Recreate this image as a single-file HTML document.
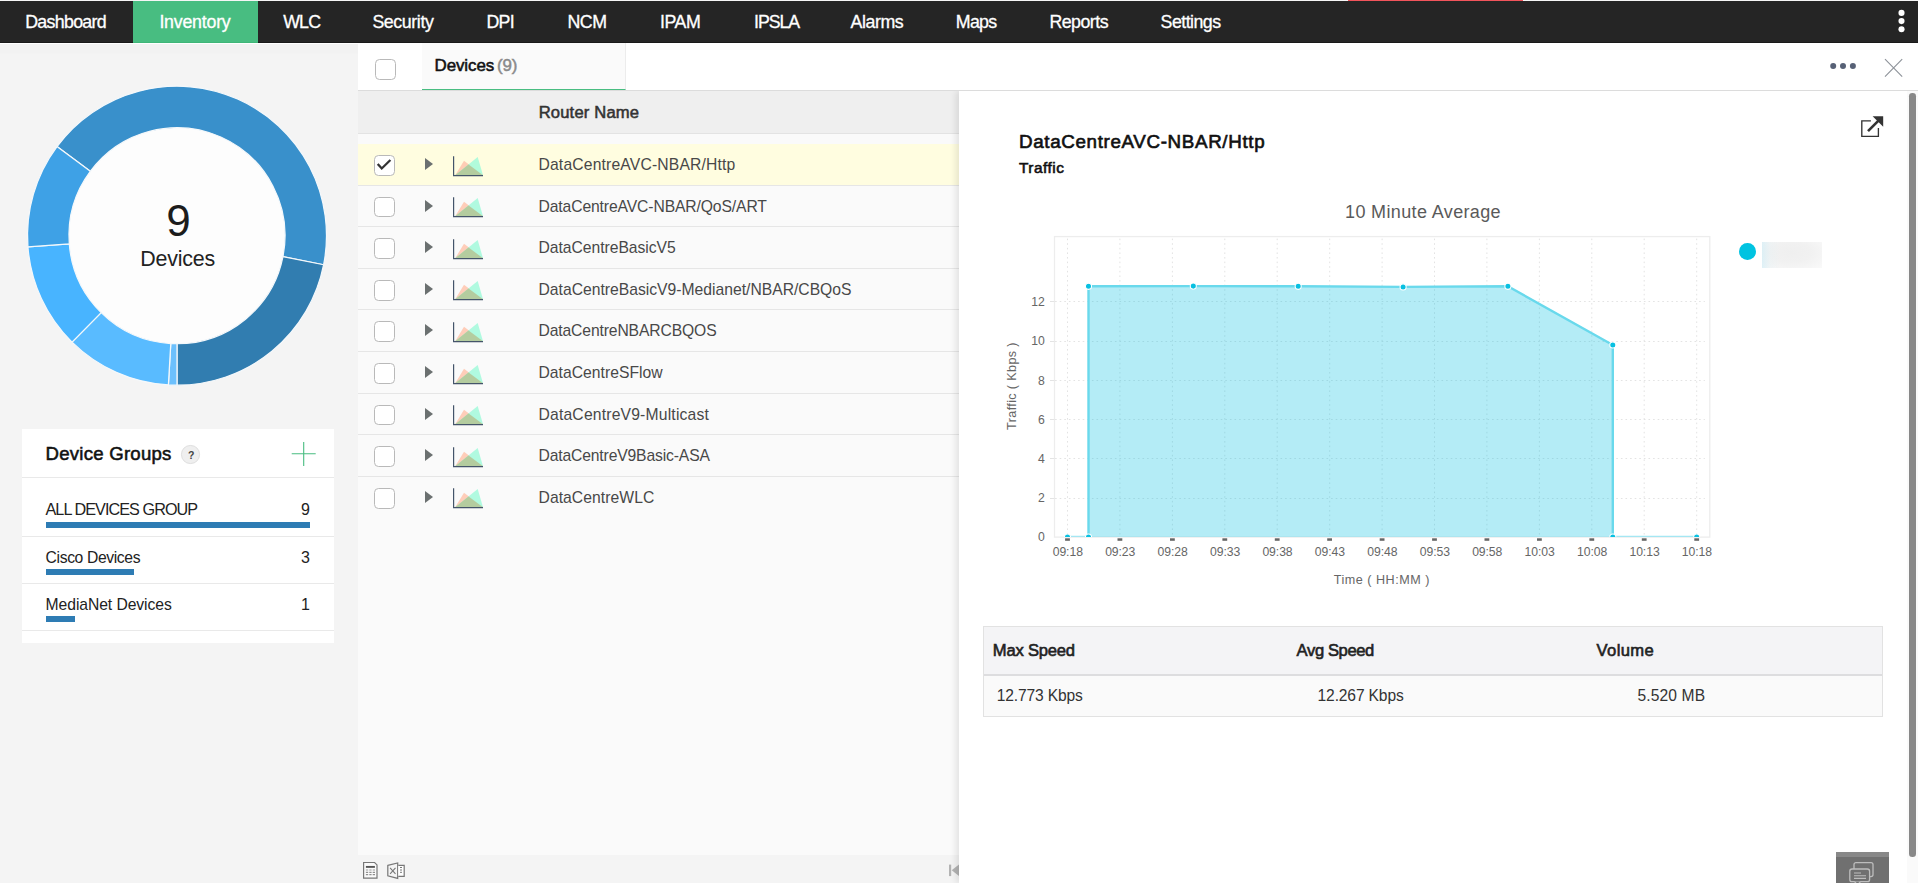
<!DOCTYPE html>
<html lang="en">
<head>
<meta charset="utf-8">
<title>Inventory - Devices</title>
<style>
*{box-sizing:border-box;margin:0;padding:0}
html,body{width:1918px;height:883px;overflow:hidden}
body{position:relative;background:#f4f4f4;font-family:"Liberation Sans",Arial,sans-serif;color:#333}
.t{position:absolute;white-space:nowrap;display:block}
.abs{position:absolute}
#nav{position:absolute;left:0;top:0;width:1918px;height:43px;background:#252525;border-bottom:1px solid #191919}
#topline{position:absolute;left:0;top:0;width:1918px;height:1px;background:#f6f6f6}
#redline{position:absolute;left:1348px;top:0;width:175px;height:1px;background:#f2545b}
#navsel{position:absolute;left:133px;top:1px;width:125px;height:42px;background:#48bd81;border-bottom:1px solid #3fb678}
#side{position:absolute;left:0;top:43px;width:358px;height:840px;background:linear-gradient(180deg,#fff 0,#fff 1px,#f2f2f2 1px,#f2f2f2 10px,#f4f4f4 11px)}
#main{position:absolute;left:358px;top:43px;width:1560px;height:840px;background:#fff}
#mainhead{position:absolute;left:0;top:0;width:1560px;height:48px;background:#fff;border-bottom:1px solid #dcdcdc}
#tab{position:absolute;left:63.7px;top:0;width:204px;height:47px;background:#fafafa;border-right:1px solid #ececec;border-bottom:1.5px solid #48bd81}
.cb{position:absolute;width:20.8px;height:20.8px;border:1px solid #b9b9b9;border-radius:4.5px;background:#fff}
#mbody{position:absolute;left:0;top:48px;width:1560px;height:792px;overflow:hidden}
#list{position:absolute;left:0;top:0;width:601px;height:792px;background:#fafafa}
#thead{position:absolute;left:0;top:0;width:601px;height:42.5px;background:#efefef;border-bottom:1px solid #e3e3e3}
.row{position:absolute;left:0;width:601px;height:41.6px;border-bottom:1px solid #e6e6e6}
.row.sel{background:#fffde0}
.row.last{border-bottom:none}
#foot{position:absolute;left:0;top:764px;width:601px;height:28px;background:#f4f4f4}
#detail{position:absolute;left:601px;top:0;width:959px;height:792px;background:#fff;box-shadow:-3px 0 7px rgba(0,0,0,.10)}
#groups{position:absolute;left:22px;top:429px;width:312px;height:214px;background:#fff}
.gl{position:absolute;left:0;width:312px;height:1px;background:#e9e9e9}
.bar{position:absolute;left:23.7px;height:6px;background:#2e7cb4}
#stats{position:absolute;left:983px;top:626px;width:900px;height:91px;border:1px solid #e2e2e2;background:#fafafa}
#statsh{position:absolute;left:0;top:0;width:898px;height:49px;background:#f4f4f6;border-bottom:2px solid #dddddf}
#track{position:absolute;left:1907px;top:91px;width:11px;height:792px;background:#fafafa}
#scroll{position:absolute;left:1909.2px;top:93px;width:6.6px;height:764px;border-radius:3.3px;background:#888}
#chat{position:absolute;left:1835.8px;top:852px;width:53px;height:31px;background:#707070;border-top:5px solid #888}
</style>
</head>
<body>

<div id="side"></div><div id="nav"></div><div id="navsel"></div><div id="topline"></div><div id="redline"></div>
<nav>
<span class="t" style="left:25.20px;top:10.00px;font-size:17.8px;line-height:24px;color:#fff;-webkit-text-stroke:0.3px #fff;letter-spacing:-0.687px;">Dashboard</span>
<span class="t" style="left:159.40px;top:10.00px;font-size:17.8px;line-height:24px;color:#fff;-webkit-text-stroke:0.3px #fff;letter-spacing:-0.224px;">Inventory</span>
<span class="t" style="left:283.15px;top:10.00px;font-size:17.8px;line-height:24px;color:#fff;-webkit-text-stroke:0.3px #fff;letter-spacing:-0.802px;">WLC</span>
<span class="t" style="left:372.40px;top:10.00px;font-size:17.8px;line-height:24px;color:#fff;-webkit-text-stroke:0.3px #fff;letter-spacing:-0.394px;">Security</span>
<span class="t" style="left:486.40px;top:10.00px;font-size:17.8px;line-height:24px;color:#fff;-webkit-text-stroke:0.3px #fff;letter-spacing:-0.674px;">DPI</span>
<span class="t" style="left:567.40px;top:10.00px;font-size:17.8px;line-height:24px;color:#fff;-webkit-text-stroke:0.3px #fff;letter-spacing:-0.379px;">NCM</span>
<span class="t" style="left:659.90px;top:10.00px;font-size:17.8px;line-height:24px;color:#fff;-webkit-text-stroke:0.3px #fff;letter-spacing:-0.387px;">IPAM</span>
<span class="t" style="left:754.10px;top:10.00px;font-size:17.8px;line-height:24px;color:#fff;-webkit-text-stroke:0.3px #fff;letter-spacing:-1.113px;">IPSLA</span>
<span class="t" style="left:850.60px;top:10.00px;font-size:17.8px;line-height:24px;color:#fff;-webkit-text-stroke:0.3px #fff;letter-spacing:-0.431px;">Alarms</span>
<span class="t" style="left:955.80px;top:10.00px;font-size:17.8px;line-height:24px;color:#fff;-webkit-text-stroke:0.3px #fff;letter-spacing:-0.732px;">Maps</span>
<span class="t" style="left:1049.40px;top:10.00px;font-size:17.8px;line-height:24px;color:#fff;-webkit-text-stroke:0.3px #fff;letter-spacing:-0.518px;">Reports</span>
<span class="t" style="left:1160.60px;top:10.00px;font-size:17.8px;line-height:24px;color:#fff;-webkit-text-stroke:0.3px #fff;letter-spacing:-0.540px;">Settings</span>
</nav>
<svg class="abs" style="left:1895px;top:6px" width="14" height="30" viewBox="0 0 14 30"><circle cx="6.5" cy="6.9" r="3.05" fill="#fff"/><circle cx="6.5" cy="15.1" r="3.05" fill="#fff"/><circle cx="6.5" cy="23.2" r="3.05" fill="#fff"/></svg>
<aside>
<svg class="abs" style="left:0;top:43px" width="358" height="380" viewBox="0 43 358 380">
<circle cx="177" cy="235.7" r="109" fill="#fdfdfd"/>
<path d="M56.98,146.56 A149.5,149.5 0 0 1 323.65,264.74 L282.94,256.68 A108,108 0 0 0 90.30,171.31 Z" fill="#3990cb" stroke="#f4f8fb" stroke-width="1.25" stroke-linejoin="round"/>
<path d="M323.65,264.74 A149.5,149.5 0 0 1 177.00,385.20 L177.00,343.70 A108,108 0 0 0 282.94,256.68 Z" fill="#317db0" stroke="#f4f8fb" stroke-width="1.25" stroke-linejoin="round"/>
<path d="M177.00,385.20 A149.5,149.5 0 0 1 168.39,384.95 L170.78,343.52 A108,108 0 0 0 177.00,343.70 Z" fill="#6cc0fd" stroke="#f4f8fb" stroke-width="1.25" stroke-linejoin="round"/>
<path d="M168.39,384.95 A149.5,149.5 0 0 1 72.03,342.15 L101.17,312.60 A108,108 0 0 0 170.78,343.52 Z" fill="#59bbff" stroke="#f4f8fb" stroke-width="1.25" stroke-linejoin="round"/>
<path d="M72.03,342.15 A149.5,149.5 0 0 1 27.92,246.91 L69.30,243.80 A108,108 0 0 0 101.17,312.60 Z" fill="#48b4ff" stroke="#f4f8fb" stroke-width="1.25" stroke-linejoin="round"/>
<path d="M27.92,246.91 A149.5,149.5 0 0 1 56.98,146.56 L90.30,171.31 A108,108 0 0 0 69.30,243.80 Z" fill="#3ea1e6" stroke="#f4f8fb" stroke-width="1.25" stroke-linejoin="round"/>
</svg>
<span class="t" style="left:166.16px;top:194.00px;font-size:44px;line-height:53px;color:#1c1c1c;">9</span>
<span class="t" style="left:140.30px;top:245.00px;font-size:21.4px;line-height:28px;color:#222;letter-spacing:-0.216px;">Devices</span>
<div id="groups">
<div class="gl" style="top:48px"></div><div class="gl" style="top:107px"></div><div class="gl" style="top:154px"></div><div class="gl" style="top:201px"></div>
<div class="bar" style="top:93px;width:264.3px"></div><div class="bar" style="top:140px;width:88.1px"></div><div class="bar" style="top:187px;width:29.2px"></div>
<div class="abs" style="left:159.2px;top:16.3px;width:18.4px;height:18.4px;border-radius:50%;background:#efefef;border:1px solid #dfdfdf"></div>
<svg class="abs" style="left:269px;top:11.6px" width="26" height="26" viewBox="0 0 26 26"><path d="M12.7 1v24M0.7 12.7h24" stroke="#48bd81" stroke-width="1.1" fill="none"/></svg>
</div>
<span class="t" style="left:45.60px;top:441.00px;font-size:18.6px;line-height:25px;color:#111;-webkit-text-stroke:0.55px #111;letter-spacing:0.229px;">Device Groups</span>
<span class="t" style="left:187.89px;top:447.00px;font-size:10.5px;line-height:16px;color:#444;font-weight:700;">?</span>
<span class="t" style="left:45.50px;top:498.00px;font-size:16.2px;line-height:22px;color:#222;letter-spacing:-0.939px;">ALL DEVICES GROUP</span>
<span class="t" style="left:45.60px;top:547.00px;font-size:15.7px;line-height:21px;color:#222;letter-spacing:-0.374px;">Cisco Devices</span>
<span class="t" style="left:45.60px;top:594.00px;font-size:15.7px;line-height:21px;color:#222;letter-spacing:-0.075px;">MediaNet Devices</span>
<span class="t" style="left:301.10px;top:499.00px;font-size:16px;line-height:21px;color:#222;">9</span>
<span class="t" style="left:301.10px;top:547.00px;font-size:16px;line-height:21px;color:#222;">3</span>
<span class="t" style="left:301.10px;top:594.00px;font-size:16px;line-height:21px;color:#222;">1</span>
</aside>
<main>
<div id="main">
<div id="mainhead"><div id="tab"></div><div class="cb" style="left:17.1px;top:16px"></div></div>
<div id="mbody"><div id="list"><div id="thead"></div>
<div class="row sel" style="top:53.0px">
<div class="cb" style="left:16.1px;top:11.1px"><svg class="abs" style="left:0;top:0" width="19" height="19" viewBox="0 0 19 19"><path d="M2.7 7.9 L6.75 12.45 L15.4 3.95" fill="none" stroke="#333" stroke-width="2.3"/></svg></div>
<svg class="abs" style="left:66px;top:13px" width="10" height="14" viewBox="0 0 10 14"><path d="M1 1.1 L9 7.1 L1 13.1Z" fill="#6b7070"/></svg><svg class="abs" style="left:94px;top:10.5px" width="34" height="23" viewBox="0 0 34 23"><path d="M3.2 20.3 L12 5.7 L31 20.3Z" fill="#ffc4ad" fill-opacity=".85"/><path d="M3.2 20.3 L25.7 1.9 L31 20.3Z" fill="#9dfada" fill-opacity=".8"/><path d="M3.2 20.3 L16.5 9.4 L31 20.3Z" fill="#b4cc9f"/><path d="M1.6 1.3V20.55H31" fill="none" stroke="#44546a" stroke-width="1.2"/></svg>
</div>
<div class="row" style="top:94.6px">
<div class="cb" style="left:16.1px;top:11.1px"></div>
<svg class="abs" style="left:66px;top:13px" width="10" height="14" viewBox="0 0 10 14"><path d="M1 1.1 L9 7.1 L1 13.1Z" fill="#6b7070"/></svg><svg class="abs" style="left:94px;top:10.5px" width="34" height="23" viewBox="0 0 34 23"><path d="M3.2 20.3 L12 5.7 L31 20.3Z" fill="#ffc4ad" fill-opacity=".85"/><path d="M3.2 20.3 L25.7 1.9 L31 20.3Z" fill="#9dfada" fill-opacity=".8"/><path d="M3.2 20.3 L16.5 9.4 L31 20.3Z" fill="#b4cc9f"/><path d="M1.6 1.3V20.55H31" fill="none" stroke="#44546a" stroke-width="1.2"/></svg>
</div>
<div class="row" style="top:136.2px">
<div class="cb" style="left:16.1px;top:11.1px"></div>
<svg class="abs" style="left:66px;top:13px" width="10" height="14" viewBox="0 0 10 14"><path d="M1 1.1 L9 7.1 L1 13.1Z" fill="#6b7070"/></svg><svg class="abs" style="left:94px;top:10.5px" width="34" height="23" viewBox="0 0 34 23"><path d="M3.2 20.3 L12 5.7 L31 20.3Z" fill="#ffc4ad" fill-opacity=".85"/><path d="M3.2 20.3 L25.7 1.9 L31 20.3Z" fill="#9dfada" fill-opacity=".8"/><path d="M3.2 20.3 L16.5 9.4 L31 20.3Z" fill="#b4cc9f"/><path d="M1.6 1.3V20.55H31" fill="none" stroke="#44546a" stroke-width="1.2"/></svg>
</div>
<div class="row" style="top:177.8px">
<div class="cb" style="left:16.1px;top:11.1px"></div>
<svg class="abs" style="left:66px;top:13px" width="10" height="14" viewBox="0 0 10 14"><path d="M1 1.1 L9 7.1 L1 13.1Z" fill="#6b7070"/></svg><svg class="abs" style="left:94px;top:10.5px" width="34" height="23" viewBox="0 0 34 23"><path d="M3.2 20.3 L12 5.7 L31 20.3Z" fill="#ffc4ad" fill-opacity=".85"/><path d="M3.2 20.3 L25.7 1.9 L31 20.3Z" fill="#9dfada" fill-opacity=".8"/><path d="M3.2 20.3 L16.5 9.4 L31 20.3Z" fill="#b4cc9f"/><path d="M1.6 1.3V20.55H31" fill="none" stroke="#44546a" stroke-width="1.2"/></svg>
</div>
<div class="row" style="top:219.4px">
<div class="cb" style="left:16.1px;top:11.1px"></div>
<svg class="abs" style="left:66px;top:13px" width="10" height="14" viewBox="0 0 10 14"><path d="M1 1.1 L9 7.1 L1 13.1Z" fill="#6b7070"/></svg><svg class="abs" style="left:94px;top:10.5px" width="34" height="23" viewBox="0 0 34 23"><path d="M3.2 20.3 L12 5.7 L31 20.3Z" fill="#ffc4ad" fill-opacity=".85"/><path d="M3.2 20.3 L25.7 1.9 L31 20.3Z" fill="#9dfada" fill-opacity=".8"/><path d="M3.2 20.3 L16.5 9.4 L31 20.3Z" fill="#b4cc9f"/><path d="M1.6 1.3V20.55H31" fill="none" stroke="#44546a" stroke-width="1.2"/></svg>
</div>
<div class="row" style="top:261.0px">
<div class="cb" style="left:16.1px;top:11.1px"></div>
<svg class="abs" style="left:66px;top:13px" width="10" height="14" viewBox="0 0 10 14"><path d="M1 1.1 L9 7.1 L1 13.1Z" fill="#6b7070"/></svg><svg class="abs" style="left:94px;top:10.5px" width="34" height="23" viewBox="0 0 34 23"><path d="M3.2 20.3 L12 5.7 L31 20.3Z" fill="#ffc4ad" fill-opacity=".85"/><path d="M3.2 20.3 L25.7 1.9 L31 20.3Z" fill="#9dfada" fill-opacity=".8"/><path d="M3.2 20.3 L16.5 9.4 L31 20.3Z" fill="#b4cc9f"/><path d="M1.6 1.3V20.55H31" fill="none" stroke="#44546a" stroke-width="1.2"/></svg>
</div>
<div class="row" style="top:302.6px">
<div class="cb" style="left:16.1px;top:11.1px"></div>
<svg class="abs" style="left:66px;top:13px" width="10" height="14" viewBox="0 0 10 14"><path d="M1 1.1 L9 7.1 L1 13.1Z" fill="#6b7070"/></svg><svg class="abs" style="left:94px;top:10.5px" width="34" height="23" viewBox="0 0 34 23"><path d="M3.2 20.3 L12 5.7 L31 20.3Z" fill="#ffc4ad" fill-opacity=".85"/><path d="M3.2 20.3 L25.7 1.9 L31 20.3Z" fill="#9dfada" fill-opacity=".8"/><path d="M3.2 20.3 L16.5 9.4 L31 20.3Z" fill="#b4cc9f"/><path d="M1.6 1.3V20.55H31" fill="none" stroke="#44546a" stroke-width="1.2"/></svg>
</div>
<div class="row" style="top:344.2px">
<div class="cb" style="left:16.1px;top:11.1px"></div>
<svg class="abs" style="left:66px;top:13px" width="10" height="14" viewBox="0 0 10 14"><path d="M1 1.1 L9 7.1 L1 13.1Z" fill="#6b7070"/></svg><svg class="abs" style="left:94px;top:10.5px" width="34" height="23" viewBox="0 0 34 23"><path d="M3.2 20.3 L12 5.7 L31 20.3Z" fill="#ffc4ad" fill-opacity=".85"/><path d="M3.2 20.3 L25.7 1.9 L31 20.3Z" fill="#9dfada" fill-opacity=".8"/><path d="M3.2 20.3 L16.5 9.4 L31 20.3Z" fill="#b4cc9f"/><path d="M1.6 1.3V20.55H31" fill="none" stroke="#44546a" stroke-width="1.2"/></svg>
</div>
<div class="row last" style="top:385.8px">
<div class="cb" style="left:16.1px;top:11.1px"></div>
<svg class="abs" style="left:66px;top:13px" width="10" height="14" viewBox="0 0 10 14"><path d="M1 1.1 L9 7.1 L1 13.1Z" fill="#6b7070"/></svg><svg class="abs" style="left:94px;top:10.5px" width="34" height="23" viewBox="0 0 34 23"><path d="M3.2 20.3 L12 5.7 L31 20.3Z" fill="#ffc4ad" fill-opacity=".85"/><path d="M3.2 20.3 L25.7 1.9 L31 20.3Z" fill="#9dfada" fill-opacity=".8"/><path d="M3.2 20.3 L16.5 9.4 L31 20.3Z" fill="#b4cc9f"/><path d="M1.6 1.3V20.55H31" fill="none" stroke="#44546a" stroke-width="1.2"/></svg>
</div>
<div id="foot">
<svg class="abs" style="left:4px;top:6px" width="46" height="20" viewBox="0 0 46 20"><g fill="none" stroke="#777" stroke-width="1.2"><path d="M1.6 1.5h11l2.4 2.4v13.2H1.6z" fill="#fafafa"/><path d="M3.9 5.9h9" stroke-width="1.9" stroke="#555"/><path d="M3.9 9h2.3M7.3 9h2.3M10.7 9h2.3" stroke="#999"/><path d="M3.9 11.3h2.3M7.3 11.3h2.3M10.7 11.3h2.3M3.9 13.7h2.3M7.3 13.7h2.3M10.7 13.7h2.3" stroke-width="1"/><path d="M25.8 4.4 L35.7 1.9 V17.4 L25.8 14.8Z"/><path d="M36.3 4.3h5.9v11h-5.9" fill="#fff"/><path d="M28.1 6.9l5.4 5.9M33.5 6.9l-5.4 5.9" stroke-width="1.1"/><path d="M38 6.5h2M38 9h2M38 11.3h2" stroke-width="1"/></g></svg>
<svg class="abs" style="left:588px;top:9px" width="13" height="13" viewBox="0 0 13 13"><path d="M4.1 0.6v11.5" stroke="#b3b3b3" stroke-width="2.2"/><path d="M5.7 6.35L13 0.6v11.5z" fill="#b3b3b3"/></svg>
</div>
</div>
<div id="detail"></div></div>
</div>
<span class="t" style="left:434.60px;top:54.00px;font-size:16.9px;line-height:23px;color:#111;-webkit-text-stroke:0.55px #111;letter-spacing:-0.087px;">Devices</span>
<span class="t" style="left:497.00px;top:54.00px;font-size:16.9px;line-height:23px;color:#8a8a8a;-webkit-text-stroke:0.5px #8a8a8a;letter-spacing:-0.119px;">(9)</span>
<span class="t" style="left:538.70px;top:101.00px;font-size:16.6px;line-height:23px;color:#333;-webkit-text-stroke:0.55px #333;letter-spacing:0.162px;">Router Name</span>
<span class="t" style="left:538.50px;top:154.00px;font-size:15.7px;line-height:21px;color:#484848;letter-spacing:0.160px;">DataCentreAVC-NBAR/Http</span>
<span class="t" style="left:538.50px;top:196.00px;font-size:15.7px;line-height:21px;color:#484848;letter-spacing:-0.116px;">DataCentreAVC-NBAR/QoS/ART</span>
<span class="t" style="left:538.50px;top:237.00px;font-size:15.7px;line-height:21px;color:#484848;letter-spacing:-0.034px;">DataCentreBasicV5</span>
<span class="t" style="left:538.50px;top:279.00px;font-size:15.7px;line-height:21px;color:#484848;">DataCentreBasicV9-Medianet/NBAR/CBQoS</span>
<span class="t" style="left:538.50px;top:320.00px;font-size:15.7px;line-height:21px;color:#484848;letter-spacing:-0.132px;">DataCentreNBARCBQOS</span>
<span class="t" style="left:538.50px;top:362.00px;font-size:15.7px;line-height:21px;color:#484848;letter-spacing:0.026px;">DataCentreSFlow</span>
<span class="t" style="left:538.50px;top:404.00px;font-size:15.7px;line-height:21px;color:#484848;letter-spacing:0.183px;">DataCentreV9-Multicast</span>
<span class="t" style="left:538.50px;top:445.00px;font-size:15.7px;line-height:21px;color:#484848;letter-spacing:-0.149px;">DataCentreV9Basic-ASA</span>
<span class="t" style="left:538.50px;top:487.00px;font-size:15.7px;line-height:21px;color:#484848;letter-spacing:0.056px;">DataCentreWLC</span>
<svg class="abs" style="left:1826px;top:60px" width="34" height="12" viewBox="0 0 34 12"><circle cx="7.2" cy="6" r="3" fill="#576176"/><circle cx="17" cy="6" r="3" fill="#576176"/><circle cx="26.9" cy="6" r="3" fill="#576176"/></svg>
<svg class="abs" style="left:1883px;top:57px" width="22" height="22" viewBox="0 0 22 22"><path d="M2 2.2 L19.2 19.7 M19.2 2.2 L2 19.7" stroke="#8d9299" stroke-width="1.1" fill="none"/></svg>
<section>
<span class="t" style="left:1019.00px;top:129.00px;font-size:18.8px;line-height:25px;color:#111;-webkit-text-stroke:0.65px #111;letter-spacing:0.648px;">DataCentreAVC-NBAR/Http</span>
<span class="t" style="left:1019.00px;top:157.00px;font-size:15.4px;line-height:21px;color:#111;-webkit-text-stroke:0.6px #111;letter-spacing:0.510px;">Traffic</span>
<svg class="abs" style="left:1858px;top:113px" width="28" height="27" viewBox="0 0 28 27"><path d="M12.9 7.9H3.8V23.3H20.4V15" fill="none" stroke="#333" stroke-width="1.35"/><path d="M10 18.2 L20.5 7.6" stroke="#333" stroke-width="2.6" fill="none"/><path d="M14.6 3.2 H25.2 V13.8Z" fill="#333"/></svg>
<svg class="abs" style="left:980px;top:190px" width="900" height="410" viewBox="980 190 900 410" font-family="'Liberation Sans',Arial,sans-serif">
<rect x="1054.5" y="236.6" width="655.3" height="300.5" fill="#fff" stroke="#ededed" stroke-width="1.3"/>
<path d="M1050.0 498.5H1054.5 M1050.0 458.5H1054.5 M1050.0 419.5H1054.5 M1050.0 380.5H1054.5 M1050.0 341.5H1054.5 M1050.0 301.5H1054.5" stroke="#e4e4e4" stroke-width="1" fill="none"/>
<path d="M1067.5 238.6V537.1 M1119.9 238.6V537.1 M1172.4 238.6V537.1 M1224.8 238.6V537.1 M1277.2 238.6V537.1 M1329.7 238.6V537.1 M1382.1 238.6V537.1 M1434.5 238.6V537.1 M1486.9 238.6V537.1 M1539.4 238.6V537.1 M1591.8 238.6V537.1 M1644.2 238.6V537.1 M1696.7 238.6V537.1 M1050.5 498.5H1704.8 M1050.5 458.5H1704.8 M1050.5 419.5H1704.8 M1050.5 380.5H1704.8 M1050.5 341.5H1704.8 M1050.5 301.5H1704.8" stroke="#e3e3e3" stroke-width="1" stroke-dasharray="1.6 3" fill="none"/>
<clipPath id="cp"><rect x="1054.5" y="236.6" width="655.3" height="300.4"/></clipPath>
<g clip-path="url(#cp)">
<path d="M1067.5,537.0 L1088.5,537.0 L1088.5,286.3 L1193.3,286.1 L1298.2,286.3 L1403.1,286.9 L1507.9,286.3 L1612.8,345.0 L1612.8,537.0 L1696.7,537.0 L1696.7,540.0 L1067.5,540.0Z" fill="#05c0e2" fill-opacity="0.3"/>
<path d="M1088.5,537.0 L1088.5,286.3 L1193.3,286.1 L1298.2,286.3 L1403.1,286.9 L1507.9,286.3 L1612.8,345.0 L1612.8,537.0" fill="none" stroke="#69d9ec" stroke-width="2.4" stroke-linejoin="round"/>
<path d="M1067.5,537.0L1088.5,537.0M1612.8,537.0L1696.7,537.0" fill="none" stroke="#a5e7f3" stroke-width="2.6"/>
<circle cx="1067.5" cy="537.0" r="3.05" fill="#08c0e1" stroke="#fff" stroke-width="1.05"/>
<circle cx="1088.5" cy="537.0" r="3.05" fill="#08c0e1" stroke="#fff" stroke-width="1.05"/>
<circle cx="1088.5" cy="286.3" r="3.05" fill="#08c0e1" stroke="#fff" stroke-width="1.05"/>
<circle cx="1193.3" cy="286.1" r="3.05" fill="#08c0e1" stroke="#fff" stroke-width="1.05"/>
<circle cx="1298.2" cy="286.3" r="3.05" fill="#08c0e1" stroke="#fff" stroke-width="1.05"/>
<circle cx="1403.1" cy="286.9" r="3.05" fill="#08c0e1" stroke="#fff" stroke-width="1.05"/>
<circle cx="1507.9" cy="286.3" r="3.05" fill="#08c0e1" stroke="#fff" stroke-width="1.05"/>
<circle cx="1612.8" cy="345.0" r="3.05" fill="#08c0e1" stroke="#fff" stroke-width="1.05"/>
<circle cx="1612.8" cy="537.0" r="3.05" fill="#08c0e1" stroke="#fff" stroke-width="1.05"/>
<circle cx="1696.7" cy="537.0" r="3.05" fill="#08c0e1" stroke="#fff" stroke-width="1.05"/>
</g>
<rect x="1065.1" y="538.3" width="4.8" height="2.5" fill="#666"/>
<rect x="1117.5" y="538.3" width="4.8" height="2.5" fill="#666"/>
<rect x="1170.0" y="538.3" width="4.8" height="2.5" fill="#666"/>
<rect x="1222.4" y="538.3" width="4.8" height="2.5" fill="#666"/>
<rect x="1274.8" y="538.3" width="4.8" height="2.5" fill="#666"/>
<rect x="1327.2" y="538.3" width="4.8" height="2.5" fill="#666"/>
<rect x="1379.7" y="538.3" width="4.8" height="2.5" fill="#666"/>
<rect x="1432.1" y="538.3" width="4.8" height="2.5" fill="#666"/>
<rect x="1484.5" y="538.3" width="4.8" height="2.5" fill="#666"/>
<rect x="1537.0" y="538.3" width="4.8" height="2.5" fill="#666"/>
<rect x="1589.4" y="538.3" width="4.8" height="2.5" fill="#666"/>
<rect x="1641.8" y="538.3" width="4.8" height="2.5" fill="#666"/>
<rect x="1694.3" y="538.3" width="4.8" height="2.5" fill="#666"/>
</svg>
<span class="t" style="left:1345.00px;top:200.00px;font-size:18px;line-height:24px;color:#5a5a5a;letter-spacing:0.366px;">10 Minute Average</span>
<span class="t" style="left:1052.70px;top:543.00px;font-size:12.2px;line-height:18px;color:#666;letter-spacing:-0.066px;">09:18</span>
<span class="t" style="left:1105.13px;top:543.00px;font-size:12.2px;line-height:18px;color:#666;letter-spacing:-0.066px;">09:23</span>
<span class="t" style="left:1157.56px;top:543.00px;font-size:12.2px;line-height:18px;color:#666;letter-spacing:-0.066px;">09:28</span>
<span class="t" style="left:1209.99px;top:543.00px;font-size:12.2px;line-height:18px;color:#666;letter-spacing:-0.066px;">09:33</span>
<span class="t" style="left:1262.42px;top:543.00px;font-size:12.2px;line-height:18px;color:#666;letter-spacing:-0.066px;">09:38</span>
<span class="t" style="left:1314.85px;top:543.00px;font-size:12.2px;line-height:18px;color:#666;letter-spacing:-0.066px;">09:43</span>
<span class="t" style="left:1367.28px;top:543.00px;font-size:12.2px;line-height:18px;color:#666;letter-spacing:-0.066px;">09:48</span>
<span class="t" style="left:1419.71px;top:543.00px;font-size:12.2px;line-height:18px;color:#666;letter-spacing:-0.066px;">09:53</span>
<span class="t" style="left:1472.14px;top:543.00px;font-size:12.2px;line-height:18px;color:#666;letter-spacing:-0.066px;">09:58</span>
<span class="t" style="left:1524.57px;top:543.00px;font-size:12.2px;line-height:18px;color:#666;letter-spacing:-0.066px;">10:03</span>
<span class="t" style="left:1577.00px;top:543.00px;font-size:12.2px;line-height:18px;color:#666;letter-spacing:-0.066px;">10:08</span>
<span class="t" style="left:1629.43px;top:543.00px;font-size:12.2px;line-height:18px;color:#666;letter-spacing:-0.066px;">10:13</span>
<span class="t" style="left:1681.86px;top:543.00px;font-size:12.2px;line-height:18px;color:#666;letter-spacing:-0.066px;">10:18</span>
<span class="t" style="left:1038.01px;top:528.00px;font-size:12.2px;line-height:18px;color:#666;">0</span>
<span class="t" style="left:1038.01px;top:489.00px;font-size:12.2px;line-height:18px;color:#666;">2</span>
<span class="t" style="left:1038.01px;top:450.00px;font-size:12.2px;line-height:18px;color:#666;">4</span>
<span class="t" style="left:1038.01px;top:411.00px;font-size:12.2px;line-height:18px;color:#666;">6</span>
<span class="t" style="left:1038.01px;top:372.00px;font-size:12.2px;line-height:18px;color:#666;">8</span>
<span class="t" style="left:1031.23px;top:332.00px;font-size:12.2px;line-height:18px;color:#666;">10</span>
<span class="t" style="left:1031.23px;top:293.00px;font-size:12.2px;line-height:18px;color:#666;">12</span>
<span class="t" style="left:1333.70px;top:571.00px;font-size:12.6px;line-height:18px;color:#666;letter-spacing:0.506px;">Time ( HH:MM )</span>
<span class="t" style="left:1012px;top:386.4px;font-size:12.6px;line-height:16px;color:#666;letter-spacing:0.37px;transform:translate(-50%,-50%) rotate(-90deg)">Traffic ( Kbps )</span>
<div class="abs" style="left:1739px;top:242.95px;width:16.8px;height:16.8px;border-radius:50%;background:#00c3e1"></div>
<div class="abs" style="left:1762px;top:242px;width:60px;height:26px;background:linear-gradient(90deg,rgba(205,236,246,.6) 0,rgba(226,240,244,.3) 14%,rgba(240,240,240,0) 30%),radial-gradient(ellipse at 48% 40%,#efefef 0,#f1f1f1 45%,#f9f9f9 100%)"></div>
<div id="stats"><div id="statsh"></div></div>
<span class="t" style="left:992.80px;top:639.00px;font-size:16.6px;line-height:23px;color:#222;-webkit-text-stroke:0.6px #222;letter-spacing:-0.219px;">Max Speed</span>
<span class="t" style="left:1296.60px;top:639.00px;font-size:16.6px;line-height:23px;color:#222;-webkit-text-stroke:0.6px #222;letter-spacing:-0.391px;">Avg Speed</span>
<span class="t" style="left:1596.60px;top:639.00px;font-size:16.6px;line-height:23px;color:#222;-webkit-text-stroke:0.6px #222;letter-spacing:0.338px;">Volume</span>
<span class="t" style="left:996.80px;top:685.00px;font-size:15.6px;line-height:21px;color:#333;letter-spacing:-0.146px;">12.773 Kbps</span>
<span class="t" style="left:1317.60px;top:685.00px;font-size:15.6px;line-height:21px;color:#333;letter-spacing:-0.146px;">12.267 Kbps</span>
<span class="t" style="left:1637.60px;top:685.00px;font-size:15.6px;line-height:21px;color:#333;letter-spacing:0.103px;">5.520 MB</span>
</section>
</main>
<div id="track"></div><div id="scroll"></div>
<div id="chat"><svg class="abs" style="left:10.9px;top:2.6px" width="30" height="24" viewBox="0 0 30 24"><g fill="none" stroke="#bdbdbd" stroke-width="1.3"><path d="M7 9V4.6a2 2 0 0 1 2-2h15a2 2 0 0 1 2 2v10a2 2 0 0 1-2 2h-2.6"/><rect x="2.8" y="9" width="19.8" height="12.6" rx="2.2" fill="#707070"/><path d="M7.6 21.6l2.9 3.4 2.9-3.4" fill="#707070"/><path d="M7 13h7M7 15.8h12M7 18.4h12" stroke-width="1.1"/></g></svg></div>
</body></html>
